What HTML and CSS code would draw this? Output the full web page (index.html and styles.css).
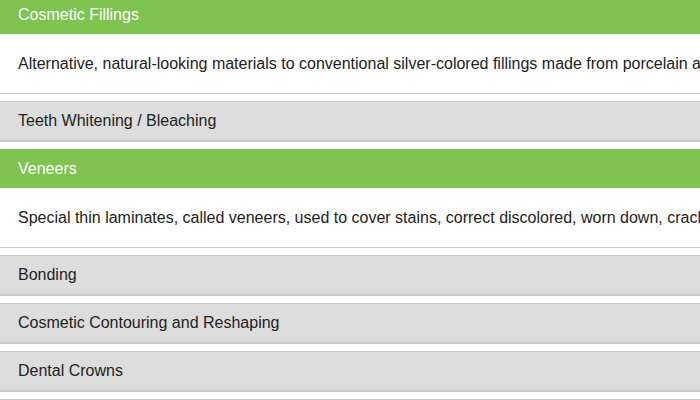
FILE: index.html
```html
<!DOCTYPE html>
<html>
<head>
<meta charset="utf-8">
<link rel="stylesheet" href="styles.css">
</head>
<body>
<div class="accordion">
  <div class="panel open">
    <div class="head">Cosmetic Fillings</div>
    <div class="body">Alternative, natural-looking materials to conventional silver-colored fillings made from porcelain and composite resin that bond to the teeth.</div>
  </div>
  <div class="panel">
    <div class="head">Teeth Whitening / Bleaching</div>
  </div>
  <div class="panel open">
    <div class="head">Veneers</div>
    <div class="body">Special thin laminates, called veneers, used to cover stains, correct discolored, worn down, cracked or chipped teeth.</div>
  </div>
  <div class="panel">
    <div class="head">Bonding</div>
  </div>
  <div class="panel">
    <div class="head">Cosmetic Contouring and Reshaping</div>
  </div>
  <div class="panel">
    <div class="head">Dental Crowns</div>
  </div>
  <div class="panel">
    <div class="head">Dental Implants</div>
  </div>
</div>
</body>
</html>
```
FILE: styles.css
```css
html, body {
  margin: 0;
  padding: 0;
  background: #ffffff;
  overflow: hidden;
}
body {
  font-family: "Liberation Sans", Arial, sans-serif;
  font-size: 16px;
  color: #222222;
}
.accordion {
  margin-top: -5px;
  display: flex;
  flex-direction: column;
  gap: 7px;
  white-space: nowrap;
}
.panel .head {
  height: 38px;
  line-height: 38px;
  padding: 0 18px;
  background: #dddddd;
  border-top: 1px solid #c9c9c9;
  border-bottom: 2px solid #c9c9c9;
  box-shadow: inset 0 -1px 0 #d6d6d6;
  color: #222222;
}
.panel.open .head {
  height: 39px;
  line-height: 39px;
  border: none;
  box-shadow: none;
  background: #7fc350;
  color: #ffffff;
}
.panel .body {
  height: 59px;
  line-height: 19px;
  padding: 0 18px;
  box-sizing: border-box;
  padding-top: 20px;
  background: #ffffff;
  border-bottom: 1px solid #cccccc;
  height: 60px;
  overflow: hidden;
}
```
